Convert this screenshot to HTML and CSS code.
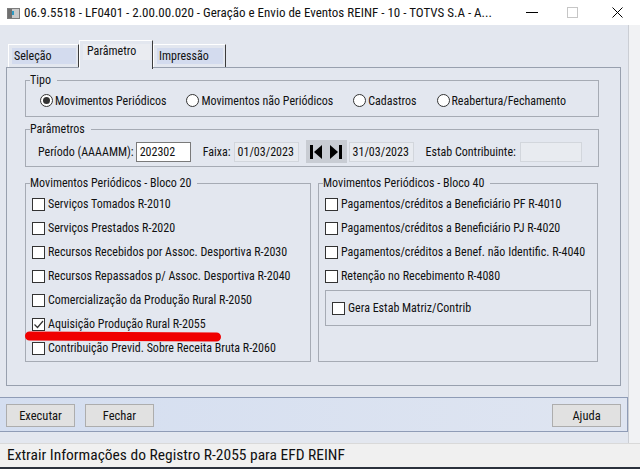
FILE: index.html
```html
<!DOCTYPE html>
<html lang="pt-BR">
<head>
    <meta charset="UTF-8">
    <meta name="viewport" content="width=device-width, initial-scale=1.0">
    <title>Geração e Envio de Eventos REINF</title>
    <link rel="stylesheet" href="styles.css">
</head>
<body>
    <div class="titlebar">
        <svg class="app-icon" width="13" height="11" viewBox="0 0 13 11">
            <rect x="0.5" y="0.5" width="12" height="10" fill="#c9c9c9" stroke="#7c7c7c"/>
            <rect x="1" y="1" width="4" height="9" fill="#6f6f6f"/>
            <rect x="5" y="3" width="2" height="4" fill="#2e9bc4"/>
        </svg>
        <span class="title">06.9.5518 - LF0401 - 2.00.00.020 - Geração e Envio de Eventos REINF - 10 - TOTVS S.A - A...</span>
        <div class="win-controls">
            <span class="ctl ctl-min"></span>
            <span class="ctl ctl-max"></span>
            <svg class="ctl ctl-close" width="11" height="11" viewBox="0 0 11 11">
                <path d="M0.5 0.5 L10.5 10.5 M10.5 0.5 L0.5 10.5" stroke="#000" stroke-width="1"/>
            </svg>
        </div>
    </div>

    <div class="frame">
        <div class="client">
            <div class="tabs">
                <div class="tab"><span>Seleção</span></div>
                <div class="tab active"><span>Parâmetro</span></div>
                <div class="tab"><span>Impressão</span></div>
            </div>

            <div class="panel">
                <div class="group tipo">
                    <span class="legend">Tipo</span>
                    <div class="radios">
                        <label class="radio"><span class="dot checked"></span>Movimentos Periódicos</label>
                        <label class="radio"><span class="dot"></span>Movimentos não Periódicos</label>
                        <label class="radio"><span class="dot"></span>Cadastros</label>
                        <label class="radio"><span class="dot"></span>Reabertura/Fechamento</label>
                    </div>
                </div>

                <div class="group params">
                    <span class="legend">Parâmetros</span>
                    <div class="param-row">
                        <span>Período (AAAAMM):</span>
                        <span class="field field-periodo">202302</span>
                        <span class="lbl-faixa">Faixa:</span>
                        <span class="field field-date">01/03/2023</span>
                        <span class="nav">
                            <svg width="14" height="16" viewBox="0 0 14 16"><rect x="1" y="1" width="3" height="14"/><polygon points="13,1 5,8 13,15"/></svg>
                            <svg width="14" height="16" viewBox="0 0 14 16"><polygon points="1,1 9,8 1,15"/><rect x="10" y="1" width="3" height="14"/></svg>
                        </span>
                        <span class="field field-date">31/03/2023</span>
                        <span class="lbl-estab">Estab Contribuinte:</span>
                        <span class="field field-estab"></span>
                    </div>
                </div>

                <div class="blocos">
                    <div class="group bloco20">
                        <span class="legend">Movimentos Periódicos - Bloco 20</span>
                        <label class="check"><span class="box"></span>Serviços Tomados R-2010</label>
                        <label class="check"><span class="box"></span>Serviços Prestados R-2020</label>
                        <label class="check"><span class="box"></span>Recursos Recebidos por Assoc. Desportiva R-2030</label>
                        <label class="check"><span class="box"></span>Recursos Repassados p/ Assoc. Desportiva R-2040</label>
                        <label class="check"><span class="box"></span>Comercialização da Produção Rural R-2050</label>
                        <label class="check"><span class="box checked"><svg width="11" height="11" viewBox="0 0 11 11"><path d="M1.5 5.5 L4.5 8.5 L10 2" fill="none" stroke="#333" stroke-width="1.2"/></svg></span>Aquisição Produção Rural R-2055</label>
                        <label class="check"><span class="box"></span>Contribuição Previd. Sobre Receita Bruta R-2060</label>
                        <div class="marker"></div>
                    </div>

                    <div class="group bloco40">
                        <span class="legend">Movimentos Periódicos - Bloco 40</span>
                        <label class="check"><span class="box"></span>Pagamentos/créditos a Beneficiário PF R-4010</label>
                        <label class="check"><span class="box"></span>Pagamentos/créditos a Beneficiário PJ R-4020</label>
                        <label class="check"><span class="box"></span>Pagamentos/créditos a Benef. não Identific. R-4040</label>
                        <label class="check"><span class="box"></span>Retenção no Recebimento R-4080</label>
                        <div class="subgroup">
                            <label class="check"><span class="box"></span>Gera Estab Matriz/Contrib</label>
                        </div>
                    </div>
                </div>
            </div>

            <div class="buttonbar">
                <button type="button">Executar</button>
                <button type="button">Fechar</button>
                <button type="button" class="btn-help">Ajuda</button>
            </div>
        </div>
        <div class="edge"></div>
    </div>

    <div class="statusbar">Extrair Informações do Registro R-2055 para EFD REINF</div>
</body>
</html>
```
FILE: styles.css
```css
body {
    margin: 0;
    width: 640px;
    height: 469px;
    overflow: hidden;
    font-family: "Roboto Condensed", "Liberation Sans", sans-serif;
    font-size: 12px;
    color: #111;
    background-color: #f0f0f0;
}

/* barra do titulo */
.titlebar {
    height: 25px;
    display: flex;
    align-items: center;
    background-color: #fff;
}
.app-icon {
    margin-left: 7px;
    margin-top: 1px;
}
.title {
    margin-left: 4px;
    font-size: 13px;
}
.win-controls {
    margin-left: auto;
    display: flex;
    align-items: center;
}
.ctl-min {
    width: 12px;
    height: 1px;
    background-color: #000;
    margin-right: 29px;
}
.ctl-max {
    width: 9px;
    height: 9px;
    border: 1px solid #c6c6c6;
    margin-right: 34px;
}
.ctl-close {
    margin-right: 17px;
}

/* area principal */
.frame {
    display: flex;
    height: 418px;
}
.client {
    width: 628px;
    padding-top: 15px;
    box-sizing: border-box;
    background-color: #e3e7ef;
}
.edge {
    flex: 1;
    border-left: 1px solid #cbced4;
    background-color: #f1f2f4;
}

/* abas */
.tabs {
    display: flex;
    align-items: flex-end;
    height: 28px;
    margin-left: 8px;
}
.tab {
    height: 24px;
    box-sizing: border-box;
    border-top: 1px solid #fff;
    border-left: 1px solid #fff;
    border-right: 1px solid #3c3c3c;
    padding: 3px 2px 2px 3px;
    z-index: 0;
}
.tab:nth-child(1) { width: 71px; }
.tab:nth-child(2) { width: 74px; }
.tab:nth-child(3) { width: 73px; }
.tab span {
    display: block;
    height: 16px;
    line-height: 17px;
    padding-left: 2px;
    background-color: #d3dbee;
}
.tab.active {
    height: 29px;
    margin-bottom: -1px;
    background-color: #e3e7ef;
    padding-top: 3px;
    z-index: 2;
}
.tab.active span {
    background-color: #eaecf1;
    line-height: 15px;
    padding-left: 4px;
}

.panel {
    position: relative;
    z-index: 1;
    width: 615px;
    height: 319px;
    margin-left: 6px;
    margin-top: -1px;
    box-sizing: border-box;
    border: 1px solid #98a0ae;
    padding: 12px 0 0 18px;
}

/* grupos */
.group {
    position: relative;
    box-sizing: border-box;
    border: 1px solid #a6abb4;
}
.legend {
    position: absolute;
    top: -8px;
    left: 4px;
    padding-right: 6px;
    line-height: 14px;
    background-color: #e3e7ef;
}
.tipo {
    width: 574px;
    height: 37px;
}
.radios {
    display: flex;
    gap: 20px;
    padding: 13px 0 0 14px;
}
.radio {
    display: flex;
    align-items: center;
    height: 13px;
}
.dot {
    width: 13px;
    height: 13px;
    box-sizing: border-box;
    border: 1px solid #333;
    border-radius: 50%;
    background-color: #fff;
    margin-right: 2px;
    display: flex;
    align-items: center;
    justify-content: center;
}
.dot.checked::after {
    content: "";
    width: 7px;
    height: 7px;
    border-radius: 50%;
    background-color: #333;
}

.params {
    width: 574px;
    height: 38px;
    margin-top: 12px;
}
.param-row {
    display: flex;
    align-items: center;
    padding: 10px 0 0 12px;
}
.field {
    height: 20px;
    box-sizing: border-box;
    line-height: 18px;
    padding-left: 3px;
    border: 1px solid #d2d6dc;
    background-color: #e8ebf0;
}
.field-periodo {
    width: 55px;
    margin-left: 2px;
    border-color: #7a7a7a;
    background-color: #fff;
}
.lbl-faixa {
    margin-left: 12px;
    margin-right: 3px;
}
.field-date {
    width: 65px;
}
.nav {
    display: flex;
    align-items: center;
    justify-content: space-around;
    width: 41px;
    height: 23px;
    margin: 0 2px 0 7px;
    background-color: #c8ccd3;
}
.lbl-estab {
    margin-left: 12px;
}
.field-estab {
    width: 62px;
    margin-left: 4px;
}

.blocos {
    display: flex;
    gap: 7px;
    margin-top: 16px;
}
.bloco20 {
    width: 286px;
    height: 179px;
    padding: 8px 0 0 6px;
}
.bloco40 {
    width: 280px;
    height: 179px;
    padding: 8px 0 0 6px;
}
.check {
    display: flex;
    align-items: center;
    height: 24px;
}
.box {
    width: 13px;
    height: 13px;
    box-sizing: border-box;
    border: 1px solid #333;
    background-color: #fff;
    margin-right: 3px;
    display: flex;
    align-items: center;
    justify-content: center;
}
.box svg {
    display: block;
}
.subgroup {
    width: 266px;
    height: 36px;
    margin-top: 2px;
    box-sizing: border-box;
    border: 1px solid #a6abb4;
    padding: 5px 0 0 6px;
}
.marker {
    position: absolute;
    left: -1px;
    top: 148px;
    width: 196px;
    height: 9px;
    border-radius: 5px;
    background-color: #f00000;
    transform: rotate(0.3deg);
}

/* botoes */
.buttonbar {
    display: flex;
    align-items: flex-start;
    gap: 10px;
    height: 35px;
    margin-top: 11px;
    box-sizing: border-box;
    padding: 6px 6px 0 6px;
    border-top: 1px solid #8f9cb6;
    border-bottom: 1px solid #8f9cb6;
    border-right: 1px solid #8f9cb6;
    background: linear-gradient(to right, #d4def0, #dfe5f1);
}
button {
    width: 69px;
    height: 23px;
    font-family: "Roboto Condensed", "Liberation Sans", sans-serif;
    font-size: 12.5px;
    color: #111;
    background-color: #e1e1e1;
    border: 1px solid #adadad;
    padding: 0;
}
.btn-help {
    margin-left: auto;
}

/* barra de status */
.statusbar {
    height: 26px;
    box-sizing: border-box;
    padding-left: 7px;
    line-height: 23px;
    font-size: 15.5px;
    border-top: 1px solid #d9d9d9;
    border-bottom: 2px solid #2b313d;
    background-color: #f0f0f0;
}
```
